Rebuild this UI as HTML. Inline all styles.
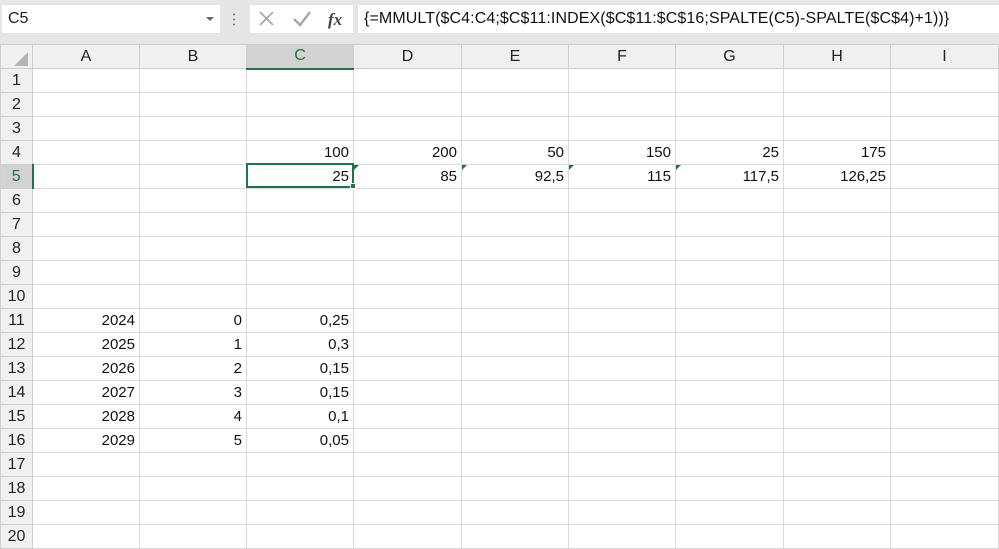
<!DOCTYPE html><html><head><meta charset="utf-8"><style>
*{margin:0;padding:0;box-sizing:border-box}
body{width:999px;height:547px;overflow:hidden;background:#fff;font-family:"Liberation Sans",Arial,sans-serif;position:relative}
.top{position:absolute;left:0;top:0;width:999px;height:44px;background:#e6e6e6}
.nb{position:absolute;left:2px;top:5px;width:218px;height:28px;background:#fff;font-size:16px;padding:5px 6px;color:#222}
.nb .ar{position:absolute;right:6px;top:12px;width:0;height:0;border-left:4px solid transparent;border-right:4px solid transparent;border-top:4px solid #666}
.dots{position:absolute;left:233px;top:12px;width:2px;height:14px;background:radial-gradient(circle,#777 0.9px,transparent 1.1px) 0 0/2px 5px}
.fb{position:absolute;left:250px;top:5px;width:103px;height:28px;background:#fff}
.fx{position:absolute;left:358px;top:5px;width:641px;height:28px;background:#fff;font-size:16px;padding:5px 6px;color:#111;white-space:nowrap;letter-spacing:0.1px}
table{position:absolute;left:0;top:44px;border-collapse:collapse;table-layout:fixed}
td{border:1px solid #dadada;height:24px;font-size:15px;text-align:right;padding:0 4px 0 0;color:#111;white-space:nowrap;overflow:visible}
tr.h td{height:24px;background:#f0f0f0;text-align:center;padding:0;color:#222;border-color:#cfcfcf;font-size:16px}
td.r{background:#f0f0f0;text-align:center;padding:0;color:#222;border-color:#cfcfcf;font-size:16px}
.sel{background:#d2d2d2 !important;color:#217346 !important}
tr.h td.sel{border-bottom:2px solid #217346}
td.r.sel{border-right:2px solid #217346}
.box{position:absolute;left:246px;top:163px;width:108px;height:25px;border:2px solid #217346}
.hd{position:absolute;left:350px;top:183px;width:6px;height:6px;background:#217346;border:1px solid #fff}
.tri{position:absolute;width:0;height:0;border-top:5px solid #217346;border-right:5px solid transparent}
</style></head><body>
<div class="top">
<div class="nb">C5<div class="ar"></div></div>
<div class="dots"></div>
<div class="fb">
<svg width="103" height="28" viewBox="0 0 103 28"><path d="M10 7 L23 20 M23 7 L10 20" stroke="#a8a8a8" stroke-width="1.8" fill="none"/><path d="M44 14 L50 20 L60 7" stroke="#a8a8a8" stroke-width="2.4" fill="none"/><text x="78" y="20" font-family="Liberation Serif,serif" font-style="italic" font-weight="bold" font-size="17" fill="#444">fx</text></svg>
</div>
<div class="fx">{=MMULT($C4:C4;$C$11:INDEX($C$11:$C$16;SPALTE(C5)-SPALTE($C$4)+1))}</div>
</div>
<table>
<colgroup><col style="width:32px"><col style="width:107px"><col style="width:107px"><col style="width:107px"><col style="width:108px"><col style="width:107px"><col style="width:107px"><col style="width:108px"><col style="width:107px"><col style="width:108px"></colgroup>
<tr class="h"><td style="background:#f0f0f0"><svg width="30" height="22" style="display:block"><path d="M27 6 L27 20 L13 20 Z" fill="#b4b4b4"/></svg></td><td>A</td><td>B</td><td class="sel">C</td><td>D</td><td>E</td><td>F</td><td>G</td><td>H</td><td>I</td></tr>
<tr><td class="r">1</td><td></td><td></td><td></td><td></td><td></td><td></td><td></td><td></td><td></td></tr>
<tr><td class="r">2</td><td></td><td></td><td></td><td></td><td></td><td></td><td></td><td></td><td></td></tr>
<tr><td class="r">3</td><td></td><td></td><td></td><td></td><td></td><td></td><td></td><td></td><td></td></tr>
<tr><td class="r">4</td><td></td><td></td><td>100</td><td>200</td><td>50</td><td>150</td><td>25</td><td>175</td><td></td></tr>
<tr><td class="r sel">5</td><td></td><td></td><td>25</td><td>85</td><td>92,5</td><td>115</td><td>117,5</td><td>126,25</td><td></td></tr>
<tr><td class="r">6</td><td></td><td></td><td></td><td></td><td></td><td></td><td></td><td></td><td></td></tr>
<tr><td class="r">7</td><td></td><td></td><td></td><td></td><td></td><td></td><td></td><td></td><td></td></tr>
<tr><td class="r">8</td><td></td><td></td><td></td><td></td><td></td><td></td><td></td><td></td><td></td></tr>
<tr><td class="r">9</td><td></td><td></td><td></td><td></td><td></td><td></td><td></td><td></td><td></td></tr>
<tr><td class="r">10</td><td></td><td></td><td></td><td></td><td></td><td></td><td></td><td></td><td></td></tr>
<tr><td class="r">11</td><td>2024</td><td>0</td><td>0,25</td><td></td><td></td><td></td><td></td><td></td><td></td></tr>
<tr><td class="r">12</td><td>2025</td><td>1</td><td>0,3</td><td></td><td></td><td></td><td></td><td></td><td></td></tr>
<tr><td class="r">13</td><td>2026</td><td>2</td><td>0,15</td><td></td><td></td><td></td><td></td><td></td><td></td></tr>
<tr><td class="r">14</td><td>2027</td><td>3</td><td>0,15</td><td></td><td></td><td></td><td></td><td></td><td></td></tr>
<tr><td class="r">15</td><td>2028</td><td>4</td><td>0,1</td><td></td><td></td><td></td><td></td><td></td><td></td></tr>
<tr><td class="r">16</td><td>2029</td><td>5</td><td>0,05</td><td></td><td></td><td></td><td></td><td></td><td></td></tr>
<tr><td class="r">17</td><td></td><td></td><td></td><td></td><td></td><td></td><td></td><td></td><td></td></tr>
<tr><td class="r">18</td><td></td><td></td><td></td><td></td><td></td><td></td><td></td><td></td><td></td></tr>
<tr><td class="r">19</td><td></td><td></td><td></td><td></td><td></td><td></td><td></td><td></td><td></td></tr>
<tr><td class="r">20</td><td></td><td></td><td></td><td></td><td></td><td></td><td></td><td></td><td></td></tr>
</table>
<div class="box"></div><div class="hd"></div>
<div class="tri" style="left:354px;top:165px"></div>
<div class="tri" style="left:462px;top:165px"></div>
<div class="tri" style="left:569px;top:165px"></div>
<div class="tri" style="left:676px;top:165px"></div>
</body></html>
